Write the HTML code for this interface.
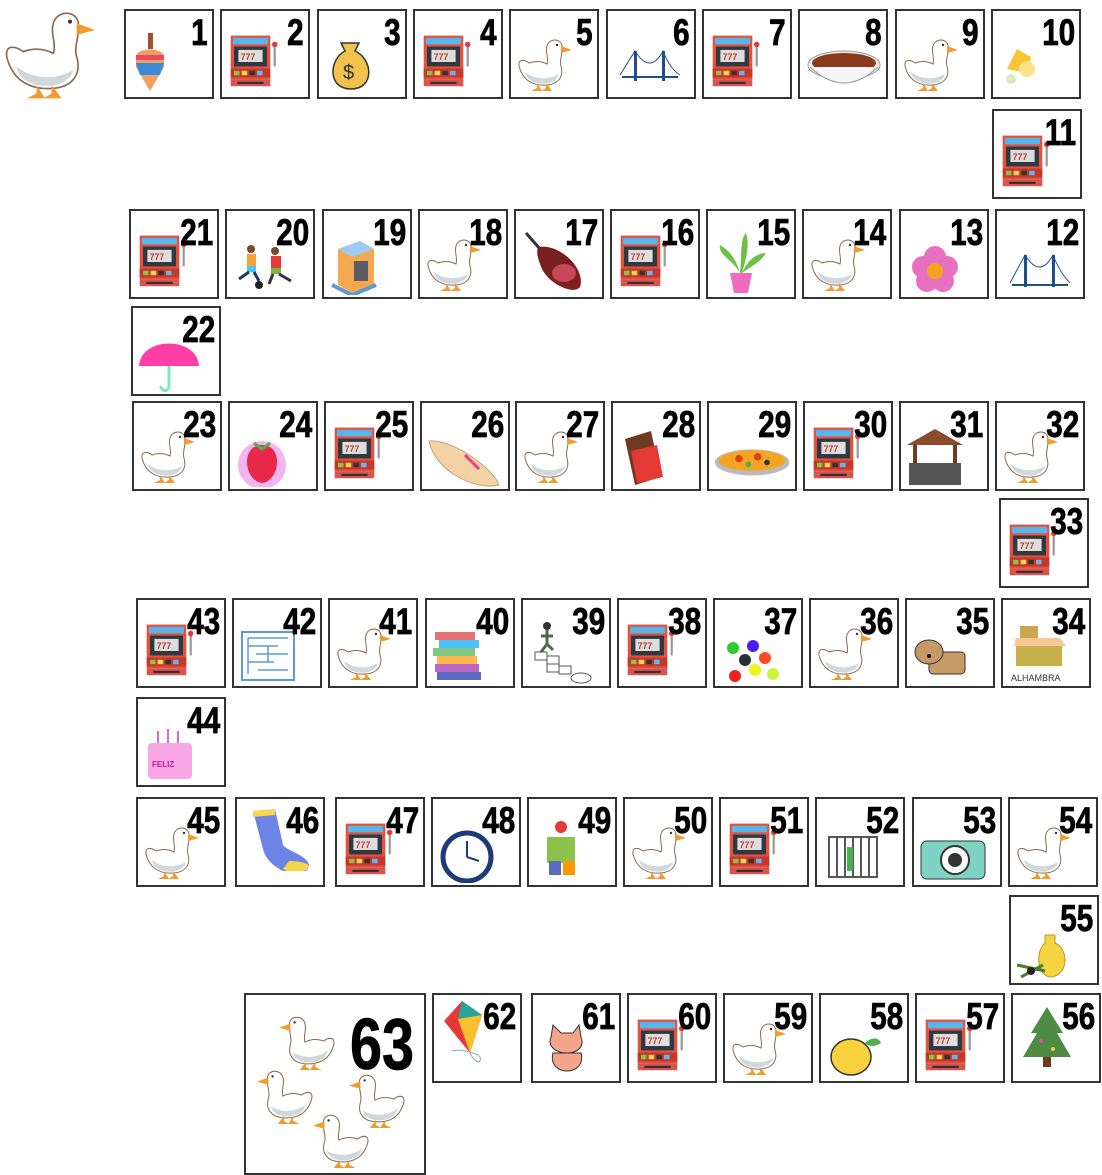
<!DOCTYPE html>
<html><head><meta charset="utf-8"><style>
body{margin:0;width:1102px;height:1175px;background:#fff;position:relative;overflow:hidden;font-family:"Liberation Sans",sans-serif}
.b{position:absolute;width:90px;height:90px;box-sizing:border-box;border:2px solid #333;background:#fff}
.b span{position:absolute;top:3px;right:4px;font-weight:bold;font-size:37px;line-height:1;transform:scaleX(.8);transform-origin:right top;color:#000;z-index:2;-webkit-text-stroke:0.8px #000}
.b svg{position:absolute;left:4px;top:18px;width:60px;height:66px}
</style></head><body>
<svg width="0" height="0" style="position:absolute">
<defs>
<symbol id="g" viewBox="0 0 60 60">
<path d="M4 34 C3 26 10 28 14 31 C22 28 28 30 32 32 C34 26 30 20 32 14 C34 6 46 6 47 14 C48 22 44 28 46 34 C49 44 44 52 32 53 C20 54 8 50 4 34Z" fill="#fff" stroke="#8a6a50" stroke-width="1"/>
<path d="M10 40 C20 48 34 48 44 42 C42 50 32 53 22 51 C15 49 11 46 10 40Z" fill="#cfd8dc"/>
<path d="M46 14 L57 18 L46 21Z" fill="#f29a2e"/>
<circle cx="42" cy="13" r="1.2" fill="#333"/>
<path d="M22 51 L22 56 L16 59 L27 59 Z M31 51 L31 56 L26 59 L37 59Z" fill="#f29a2e"/>
</symbol>
<symbol id="s" viewBox="0 0 50 60">
<rect x="2" y="6" width="36" height="40" fill="#e5503f"/>
<rect x="4" y="8" width="32" height="6" fill="#5ab4e8"/>
<rect x="5" y="16" width="30" height="18" fill="#2f3a40"/>
<rect x="9" y="19" width="22" height="11" fill="#ddd"/>
<text x="11" y="28" font-size="8" fill="#c0392b" font-family="Liberation Sans" font-weight="bold">777</text>
<rect x="2" y="36" width="36" height="8" fill="#c0392b"/>
<rect x="5" y="38" width="5" height="4" fill="#8bc34a"/><rect x="12" y="38" width="5" height="4" fill="#ffd54f"/><rect x="19" y="38" width="5" height="4" fill="#333"/><rect x="26" y="38" width="5" height="4" fill="#64b5f6"/>
<rect x="2" y="46" width="36" height="6" fill="#d9534f"/><rect x="8" y="48" width="24" height="2" fill="#333"/>
<rect x="41" y="14" width="2" height="20" fill="#999"/><circle cx="42" cy="14" r="2.5" fill="#e53935"/>
</symbol>
</defs></svg>

<svg style="position:absolute;left:0;top:0;width:100px;height:100px" viewBox="0 0 60 60"><use href="#g"/></svg>

<!-- row 1 -->
<div class="b" style="left:124px;top:9px"><svg viewBox="0 0 60 66"><rect x="18" y="4" width="5" height="16" fill="#a0522d"/><path d="M6 28 C6 18 34 18 34 28 L34 38 L20 62 L6 38Z" fill="#f0a060"/><rect x="6" y="26" width="28" height="5" fill="#e84a6a"/><path d="M6 34 L34 34 L30 46 L10 46Z" fill="#3a8ad6"/></svg><span>1</span></div>
<div class="b" style="left:220px;top:9px"><svg><use href="#s"/></svg><span>2</span></div>
<div class="b" style="left:317px;top:9px"><svg viewBox="0 0 60 66"><path d="M18 14 L36 14 L32 22 C50 30 52 60 28 60 C4 60 6 30 22 22Z" fill="#f3c14e" stroke="#333" stroke-width="1.5"/><text x="20" y="50" font-size="20" fill="#333" font-family="Liberation Sans">$</text></svg><span>3</span></div>
<div class="b" style="left:413px;top:9px"><svg><use href="#s"/></svg><span>4</span></div>
<div class="b" style="left:509px;top:9px"><svg><use href="#g"/></svg><span>5</span></div>
<div class="b" style="left:606px;top:9px"><svg viewBox="0 0 60 66" style="width:80px;left:2px"><path d="M2 48 L58 48" stroke="#1f4e8c" stroke-width="2"/><rect x="14" y="22" width="3" height="30" fill="#1f4e8c"/><rect x="42" y="22" width="3" height="30" fill="#1f4e8c"/><path d="M0 46 Q15 22 15 22 Q30 46 43 22 Q50 40 60 46" stroke="#1f4e8c" fill="none"/></svg><span>6</span></div>
<div class="b" style="left:702px;top:9px"><svg><use href="#s"/></svg><span>7</span></div>
<div class="b" style="left:798px;top:9px"><svg viewBox="0 0 80 66" style="width:84px;left:2px"><ellipse cx="40" cy="36" rx="36" ry="14" fill="#eee" stroke="#999"/><ellipse cx="40" cy="34" rx="32" ry="10" fill="#8b3a1a"/><path d="M6 38 Q40 70 74 38" fill="#f5f5f5" stroke="#999"/></svg><span>8</span></div>
<div class="b" style="left:895px;top:9px"><svg><use href="#g"/></svg><span>9</span></div>
<div class="b" style="left:991px;top:9px"><svg viewBox="0 0 60 66"><path d="M10 40 L20 20 L34 28 L30 44Z" fill="#f7c531"/><circle cx="30" cy="40" r="8" fill="#f9e28a"/><circle cx="14" cy="50" r="5" fill="#dde8c0"/></svg><span>10</span></div>
<div class="b" style="left:992px;top:109px"><svg><use href="#s"/></svg><span>11</span></div>

<!-- row 2 -->
<div class="b" style="left:129px;top:209px"><svg><use href="#s"/></svg><span>21</span></div>
<div class="b" style="left:225px;top:209px"><svg viewBox="0 0 80 66" style="width:80px;left:2px"><circle cx="22" cy="20" r="4" fill="#7a4a2a"/><rect x="18" y="25" width="9" height="12" fill="#f5a33a"/><rect x="18" y="37" width="9" height="6" fill="#4fc3f7"/><path d="M20 43 L10 50 M25 43 L30 52" stroke="#1a3a6a" stroke-width="3"/><circle cx="46" cy="22" r="4" fill="#7a4a2a"/><rect x="42" y="27" width="10" height="12" fill="#e53935"/><rect x="42" y="39" width="10" height="6" fill="#7cb342"/><path d="M44 45 L40 55 M50 45 L62 52" stroke="#333" stroke-width="3"/><circle cx="30" cy="56" r="4" fill="#222"/></svg><span>20</span></div>
<div class="b" style="left:322px;top:209px"><svg viewBox="0 0 60 66"><path d="M10 20 L32 12 L46 20 L46 56 L24 64 L10 56Z" fill="#f4a950"/><path d="M10 20 L32 12 L46 20 L24 28Z" fill="#9ecbf2"/><rect x="26" y="32" width="14" height="20" fill="#1f3a6a" opacity=".7"/><path d="M4 56 L24 66 L48 56" stroke="#5b9bd5" stroke-width="4" fill="none"/></svg><span>19</span></div>
<div class="b" style="left:418px;top:209px"><svg><use href="#g"/></svg><span>18</span></div>
<div class="b" style="left:514px;top:209px"><svg viewBox="0 0 70 66" style="width:70px"><path d="M6 4 L20 20" stroke="#333" stroke-width="3"/><path d="M18 18 C40 14 66 40 60 58 C54 66 30 56 22 40 C18 30 16 24 18 18Z" fill="#7a1f1f"/><ellipse cx="44" cy="44" rx="12" ry="9" fill="#c8485a"/></svg><span>17</span></div>
<div class="b" style="left:610px;top:209px"><svg><use href="#s"/></svg><span>16</span></div>
<div class="b" style="left:706px;top:209px"><svg viewBox="0 0 60 66"><path d="M28 44 C20 30 6 26 8 16 C18 22 24 30 28 44 C30 24 28 10 34 4 C38 16 34 30 30 44 C36 30 46 24 54 24 C48 34 38 38 30 44Z" fill="#6cc04a"/><path d="M18 44 L40 44 L36 64 L22 64Z" fill="#f06bbf"/></svg><span>15</span></div>
<div class="b" style="left:802px;top:209px"><svg><use href="#g"/></svg><span>14</span></div>
<div class="b" style="left:899px;top:209px"><svg viewBox="0 0 60 66"><g fill="#e96fc1"><circle cx="30" cy="28" r="11"/><circle cx="18" cy="38" r="11"/><circle cx="42" cy="38" r="11"/><circle cx="22" cy="52" r="11"/><circle cx="38" cy="52" r="11"/></g><circle cx="30" cy="42" r="8" fill="#f6a21e"/></svg><span>13</span></div>
<div class="b" style="left:995px;top:209px"><svg viewBox="0 0 60 66" style="width:82px;left:2px"><path d="M2 56 L58 56" stroke="#1f4e8c" stroke-width="2"/><rect x="14" y="26" width="3" height="32" fill="#1f4e8c"/><rect x="42" y="26" width="3" height="32" fill="#1f4e8c"/><path d="M0 54 Q15 26 15 26 Q30 50 43 26 Q50 44 60 54" stroke="#1f4e8c" fill="none"/></svg><span>12</span></div>
<div class="b" style="left:131px;top:306px"><svg viewBox="0 0 70 66" style="width:70px"><path d="M2 40 C4 10 60 10 62 40 Z" fill="#ff3ea5"/><path d="M32 40 L32 60 C32 66 24 66 24 60" stroke="#7de8b6" stroke-width="3" fill="none"/></svg><span>22</span></div>

<!-- row 3 -->
<div class="b" style="left:132px;top:401px"><svg><use href="#g"/></svg><span>23</span></div>
<div class="b" style="left:228px;top:401px"><svg viewBox="0 0 60 66"><circle cx="28" cy="44" r="24" fill="#f3b5f1"/><path d="M28 24 C50 24 46 60 28 62 C10 60 6 24 28 24Z" fill="#e8294c"/><path d="M20 22 L28 28 L36 22" stroke="#4caf50" stroke-width="3" fill="none"/></svg><span>24</span></div>
<div class="b" style="left:324px;top:401px"><svg><use href="#s"/></svg><span>25</span></div>
<div class="b" style="left:420px;top:401px"><svg viewBox="0 0 80 66" style="width:82px;left:2px"><path d="M4 20 C30 18 70 50 74 64 C50 70 10 50 4 20Z" fill="#f3d3a6" stroke="#c9a070"/><path d="M40 34 L54 48" stroke="#e83e8c" stroke-width="3"/></svg><span>26</span></div>
<div class="b" style="left:515px;top:401px"><svg><use href="#g"/></svg><span>27</span></div>
<div class="b" style="left:611px;top:401px"><svg viewBox="0 0 60 66"><path d="M8 18 L34 10 L44 56 L18 64Z" fill="#6d3b1f"/><path d="M14 30 L40 24 L46 56 L20 62Z" fill="#e53935"/></svg><span>28</span></div>
<div class="b" style="left:707px;top:401px"><svg viewBox="0 0 90 66" style="width:84px;left:2px"><ellipse cx="44" cy="42" rx="40" ry="14" fill="#bbb"/><ellipse cx="44" cy="40" rx="36" ry="11" fill="#f4a323"/><circle cx="30" cy="38" r="4" fill="#d84315"/><circle cx="50" cy="36" r="4" fill="#d84315"/><circle cx="60" cy="42" r="3" fill="#333"/><circle cx="40" cy="44" r="3" fill="#4caf50"/></svg><span>29</span></div>
<div class="b" style="left:803px;top:401px"><svg><use href="#s"/></svg><span>30</span></div>
<div class="b" style="left:899px;top:401px"><svg viewBox="0 0 60 66"><path d="M2 24 L30 8 L58 24Z" fill="#8b4a2a"/><rect x="8" y="24" width="4" height="20" fill="#6d3b1f"/><rect x="48" y="24" width="4" height="20" fill="#6d3b1f"/><rect x="4" y="42" width="52" height="22" fill="#555"/></svg><span>31</span></div>
<div class="b" style="left:995px;top:401px"><svg><use href="#g"/></svg><span>32</span></div>
<div class="b" style="left:999px;top:498px"><svg><use href="#s"/></svg><span>33</span></div>

<!-- row 4 -->
<div class="b" style="left:136px;top:598px"><svg><use href="#s"/></svg><span>43</span></div>
<div class="b" style="left:232px;top:598px"><svg viewBox="0 0 60 66"><rect x="4" y="14" width="52" height="48" fill="none" stroke="#5b9bd5" stroke-width="2"/><path d="M10 20 H50 M10 28 H40 M18 36 H50 M10 44 H36 M20 52 H50 M10 20 V56 M30 28 V44" stroke="#5b9bd5" stroke-width="1.5"/></svg><span>42</span></div>
<div class="b" style="left:328px;top:598px"><svg><use href="#g"/></svg><span>41</span></div>
<div class="b" style="left:425px;top:598px"><svg viewBox="0 0 60 66"><rect x="4" y="14" width="40" height="8" fill="#e57373"/><rect x="8" y="22" width="40" height="8" fill="#4fc3f7"/><rect x="2" y="30" width="42" height="8" fill="#81c784"/><rect x="6" y="38" width="40" height="8" fill="#ffb74d"/><rect x="4" y="46" width="44" height="8" fill="#ba68c8"/><rect x="6" y="54" width="44" height="8" fill="#5c6bc0"/></svg><span>40</span></div>
<div class="b" style="left:521px;top:598px"><svg viewBox="0 0 80 66" style="width:80px;left:2px"><circle cx="22" cy="8" r="4" fill="#333"/><path d="M22 12 L22 26 M16 18 L28 18 M22 26 L16 34 M22 26 L28 32" stroke="#4a6a4a" stroke-width="3"/><g fill="none" stroke="#555"><rect x="10" y="34" width="12" height="8"/><rect x="22" y="38" width="12" height="8"/><rect x="22" y="46" width="12" height="8"/><rect x="34" y="48" width="12" height="8"/><ellipse cx="56" cy="60" rx="10" ry="5"/></g></svg><span>39</span></div>
<div class="b" style="left:617px;top:598px"><svg><use href="#s"/></svg><span>38</span></div>
<div class="b" style="left:713px;top:598px"><svg viewBox="0 0 60 66"><circle cx="14" cy="30" r="6" fill="#2ecc2e"/><circle cx="34" cy="28" r="6" fill="#4a1ef5"/><circle cx="26" cy="42" r="6" fill="#263238"/><circle cx="46" cy="40" r="6" fill="#ff4a25"/><circle cx="36" cy="52" r="6" fill="#eef51e"/><circle cx="16" cy="58" r="6" fill="#f51e1e"/><circle cx="54" cy="56" r="6" fill="#c8f53a"/></svg><span>37</span></div>
<div class="b" style="left:809px;top:598px"><svg><use href="#g"/></svg><span>36</span></div>
<div class="b" style="left:905px;top:598px"><svg viewBox="0 0 60 66"><rect x="18" y="34" width="36" height="22" rx="4" fill="#c79a65" stroke="#333"/><ellipse cx="18" cy="34" rx="14" ry="12" fill="#c79a65" stroke="#333"/><circle cx="18" cy="38" r="2" fill="#111"/></svg><span>35</span></div>
<div class="b" style="left:1001px;top:598px"><svg viewBox="0 0 60 66" style="width:70px;top:16px"><rect x="8" y="10" width="18" height="12" fill="#c9a84c"/><path d="M4 22 L48 22 L54 30 L2 30Z" fill="#f7c699"/><rect x="4" y="30" width="46" height="20" fill="#c8b048"/></svg><span style="font-size:9px;font-weight:normal;top:74px;right:auto;left:8px;transform:none;color:#333;-webkit-text-stroke:0">ALHAMBRA</span><span>34</span></div>
<div class="b" style="left:136px;top:697px"><svg viewBox="0 0 60 66"><rect x="6" y="26" width="44" height="36" rx="4" fill="#f7a7e6"/><path d="M16 14 V26 M26 12 V26 M36 14 V26" stroke="#e066c7" stroke-width="2"/><text x="10" y="50" font-size="8" fill="#c0189a" font-family="Liberation Sans" font-weight="bold">FELIZ</text></svg><span>44</span></div>

<!-- row 5 -->
<div class="b" style="left:136px;top:797px"><svg><use href="#g"/></svg><span>45</span></div>
<div class="b" style="left:235px;top:797px"><svg viewBox="0 0 70 66" style="width:74px;top:6px"><path d="M10 6 L32 4 L40 40 C44 46 64 50 66 60 C66 70 50 70 40 66 C28 60 22 52 20 44Z" fill="#6c83e8"/><path d="M10 6 L32 4 L32 10 L10 12Z" fill="#f7d64a"/><path d="M46 56 C56 56 66 58 66 62 C60 70 46 68 40 64Z" fill="#f7d64a"/></svg><span>46</span></div>
<div class="b" style="left:335px;top:797px"><svg><use href="#s"/></svg><span>47</span></div>
<div class="b" style="left:431px;top:797px"><svg viewBox="0 0 60 66"><circle cx="30" cy="40" r="24" fill="#fff" stroke="#1f3a7a" stroke-width="5"/><path d="M30 40 L30 24 M30 40 L42 44" stroke="#1f3a7a" stroke-width="2"/></svg><span>48</span></div>
<div class="b" style="left:527px;top:797px"><svg viewBox="0 0 60 66"><circle cx="28" cy="10" r="6" fill="#e53935"/><rect x="14" y="20" width="28" height="26" fill="#8bc34a"/><rect x="16" y="44" width="12" height="14" fill="#5c6bc0"/><rect x="30" y="44" width="12" height="14" fill="#ff9800"/></svg><span>49</span></div>
<div class="b" style="left:623px;top:797px"><svg><use href="#g"/></svg><span>50</span></div>
<div class="b" style="left:719px;top:797px"><svg><use href="#s"/></svg><span>51</span></div>
<div class="b" style="left:815px;top:797px"><svg viewBox="0 0 60 66"><rect x="8" y="20" width="48" height="40" fill="none" stroke="#555" stroke-width="2"/><path d="M16 20 V60 M24 20 V60 M32 20 V60 M40 20 V60 M48 20 V60" stroke="#555" stroke-width="2"/><rect x="26" y="30" width="6" height="24" fill="#4caf50"/></svg><span>52</span></div>
<div class="b" style="left:912px;top:797px"><svg viewBox="0 0 70 66" style="width:74px;left:3px"><rect x="2" y="24" width="64" height="38" rx="6" fill="#7ed3c4" stroke="#333"/><circle cx="36" cy="43" r="14" fill="#fff" stroke="#333" stroke-width="2"/><circle cx="36" cy="43" r="7" fill="#333"/></svg><span>53</span></div>
<div class="b" style="left:1008px;top:797px"><svg><use href="#g"/></svg><span>54</span></div>
<div class="b" style="left:1009px;top:895px"><svg viewBox="0 0 60 66"><path d="M30 20 L40 20 L40 28 C54 34 54 60 36 62 C22 62 20 36 30 28Z" fill="#f5d442" stroke="#b59a30"/><path d="M2 50 L30 56 M6 62 L28 50" stroke="#4d7a2a" stroke-width="3"/><circle cx="16" cy="56" r="4" fill="#222"/></svg><span>55</span></div>

<!-- row 6 -->
<div class="b" style="left:244px;top:993px;width:182px;height:182px"><span style="font-size:72px;top:14px;right:10px">63</span>
<svg viewBox="0 0 60 60" style="left:30px;top:14px;width:62px;height:62px;transform:scaleX(-1)"><use href="#g"/></svg>
<svg viewBox="0 0 60 60" style="left:8px;top:68px;width:62px;height:62px;transform:scaleX(-1)"><use href="#g"/></svg>
<svg viewBox="0 0 60 60" style="left:100px;top:72px;width:62px;height:62px;transform:scaleX(-1)"><use href="#g"/></svg>
<svg viewBox="0 0 60 60" style="left:64px;top:112px;width:62px;height:62px;transform:scaleX(-1)"><use href="#g"/></svg></div>
<div class="b" style="left:432px;top:993px"><svg viewBox="0 0 60 66" style="top:4px"><path d="M24 2 L44 16 L32 54 L6 22Z" fill="#e53935"/><path d="M24 2 L44 16 L20 20Z" fill="#26a69a"/><path d="M20 20 L44 16 L32 54Z" fill="#fbc02d"/><path d="M32 54 C40 70 46 60 40 56 C30 52 20 50 14 52" stroke="#90a4ae" fill="none"/></svg><span>62</span></div>
<div class="b" style="left:531px;top:993px"><svg viewBox="0 0 60 66"><path d="M14 24 L16 12 L24 20 L36 20 L42 12 L44 24 C48 34 40 40 30 40 C20 40 10 34 14 24Z" fill="#f4a48a" stroke="#333"/><path d="M16 40 C10 64 50 64 44 40Z" fill="#f4a48a" stroke="#333"/></svg><span>61</span></div>
<div class="b" style="left:627px;top:993px"><svg><use href="#s"/></svg><span>60</span></div>
<div class="b" style="left:723px;top:993px"><svg><use href="#g"/></svg><span>59</span></div>
<div class="b" style="left:819px;top:993px"><svg viewBox="0 0 60 66"><ellipse cx="26" cy="44" rx="20" ry="18" fill="#f7d23e" stroke="#333" stroke-width="1.5"/><path d="M40 30 C46 24 54 24 56 30 C50 34 44 34 40 30Z" fill="#4caf50"/></svg><span>58</span></div>
<div class="b" style="left:915px;top:993px"><svg><use href="#s"/></svg><span>57</span></div>
<div class="b" style="left:1011px;top:993px"><svg viewBox="0 0 60 66" style="top:8px"><path d="M30 4 L46 30 L40 30 L54 54 L6 54 L20 30 L14 30Z" fill="#4e8c45"/><rect x="26" y="54" width="8" height="10" fill="#6d3b1f"/><circle cx="24" cy="38" r="2" fill="#f4a"/><circle cx="36" cy="46" r="2" fill="#fc3"/></svg><span>56</span></div>
</body></html>
